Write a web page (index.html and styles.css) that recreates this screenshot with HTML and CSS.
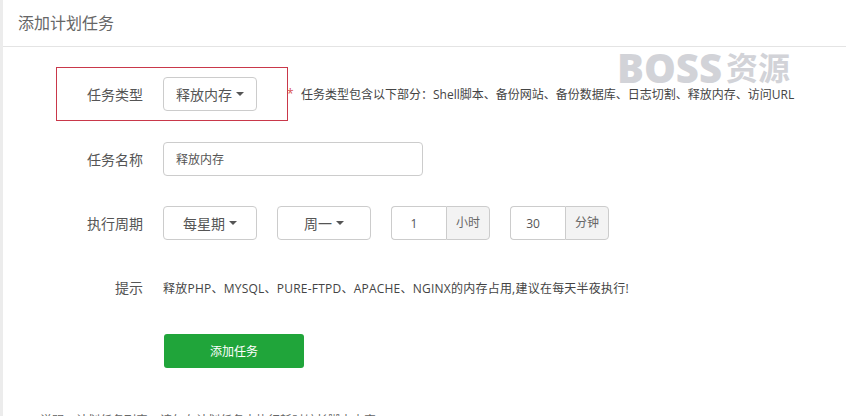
FILE: index.html
```html
<!DOCTYPE html>
<html lang="zh-CN">
<head>
<meta charset="utf-8">
<title>添加计划任务</title>
<link rel="stylesheet" href="styles.css">
</head>
<body>
<main class="panel">
  <header class="panel-head">添加计划任务</header>
  <div class="watermark">BOSS<span class="watermark-cjk">资源</span></div>
  <div class="highlight"></div>
  <form class="form">
    <div class="row">
      <span class="label">任务类型</span>
      <button type="button" class="select">释放内存<i class="caret"></i></button>
      <span class="hint"><em class="star">*</em>任务类型包含以下部分：Shell脚本、备份网站、备份数据库、日志切割、释放内存、访问URL</span>
    </div>
    <div class="row row-name">
      <span class="label">任务名称</span>
      <input class="name" type="text" value="释放内存">
    </div>
    <div class="row">
      <span class="label">执行周期</span>
      <div class="controls">
        <button type="button" class="select">每星期<i class="caret"></i></button>
        <button type="button" class="select">周一<i class="caret"></i></button>
        <div class="group"><input type="text" value="1"><span class="addon">小时</span></div>
        <div class="group"><input type="text" value="30"><span class="addon">分钟</span></div>
      </div>
    </div>
    <div class="row">
      <span class="label">提示</span>
      <span class="tip">释放PHP、MYSQL、PURE-FTPD、APACHE、NGINX的内存占用,建议在每天半夜执行!</span>
    </div>
    <div class="row row-submit">
      <button type="button" class="submit">添加任务</button>
    </div>
  </form>
  <p class="note">说明：计划任务列表，请勿在计划任务中执行耗时较长脚本内容</p>
</main>
</body>
</html>
```
FILE: styles.css
```css
* { box-sizing: border-box; }
html, body { height: 100%; }
body {
  margin: 0;
  height: 416px;
  overflow: hidden;
  background: #fff;
  color: #555;
  font-family: "Open Sans", "Noto Sans CJK SC", sans-serif;
  font-size: 14px;
}
.panel {
  position: relative;
  height: 416px;
  border-left: 3px solid #ececec;
  overflow: hidden;
}
.panel-head {
  height: 47px;
  padding-left: 15px;
  border-bottom: 1px solid #e4e4e4;
  color: #666;
  font-size: 16px;
  line-height: 46px;
}
.form { padding-top: 30px; }
.row {
  display: flex;
  align-items: center;
  height: 34px;
  margin-bottom: 30px;
}
.row-name { margin-top: 31px; }
.label {
  width: 140px;
  margin-right: 20px;
  text-align: right;
  color: #555;
}
.controls { display: flex; gap: 20px; }
.select {
  display: flex;
  align-items: center;
  justify-content: center;
  width: 94px;
  height: 34px;
  padding: 0;
  border: 1px solid #ccc;
  border-radius: 4px;
  background: #fff;
  color: #555;
  font: inherit;
}
.caret {
  width: 0;
  height: 0;
  margin-left: 4px;
  border-top: 4px solid #555;
  border-left: 4px solid transparent;
  border-right: 4px solid transparent;
}
.hint {
  position: relative;
  margin-left: 44px;
  padding-top: 2px;
  color: #444;
  font-size: 12px;
  line-height: 14px;
  white-space: nowrap;
}
.star {
  position: absolute;
  left: -14px;
  top: 1px;
  color: #d9534f;
  font-size: 12px;
  font-style: normal;
}
.name {
  width: 260px;
  height: 34px;
  padding: 0 12px;
  border: 1px solid #ccc;
  border-radius: 4px;
  color: #555;
  font: inherit;
  font-size: 12px;
}
.group { display: flex; width: 99px; height: 34px; }
.group input {
  width: 55px;
  height: 34px;
  padding: 0 22px 0 12px;
  border: 1px solid #ccc;
  border-right: 0;
  border-radius: 4px 0 0 4px;
  color: #555;
  font: inherit;
  font-size: 12px;
  text-align: center;
}
.addon {
  width: 44px;
  border: 1px solid #ccc;
  border-radius: 0 4px 4px 0;
  background: #f3f3f3;
  color: #666;
  font-size: 12px;
  line-height: 32px;
  text-align: center;
}
.tip {
  padding-top: 1px;
  color: #444;
  font-size: 12px;
  letter-spacing: 0.23px;
  white-space: nowrap;
}
.row-submit { padding-left: 161px; }
.submit {
  width: 140px;
  height: 34px;
  border: 0;
  border-radius: 3px;
  background: #20a53a;
  color: #fff;
  font: inherit;
  font-size: 12px;
}
.note {
  margin: 0;
  padding-left: 37px;
  padding-top: 13px;
  color: #666;
  font-size: 12px;
  white-space: nowrap;
}
.watermark {
  position: absolute;
  left: 614px;
  top: 50px;
  display: flex;
  align-items: center;
  color: #d2d3d8;
  font-size: 40px;
  font-weight: 800;
  line-height: 36px;
  white-space: nowrap;
}
.watermark-cjk {
  margin-left: 4px;
  font-size: 32px;
  font-weight: 700;
}
.highlight {
  position: absolute;
  left: 53px;
  top: 67px;
  width: 232px;
  height: 54px;
  border: 1px solid #c9384a;
}
```
